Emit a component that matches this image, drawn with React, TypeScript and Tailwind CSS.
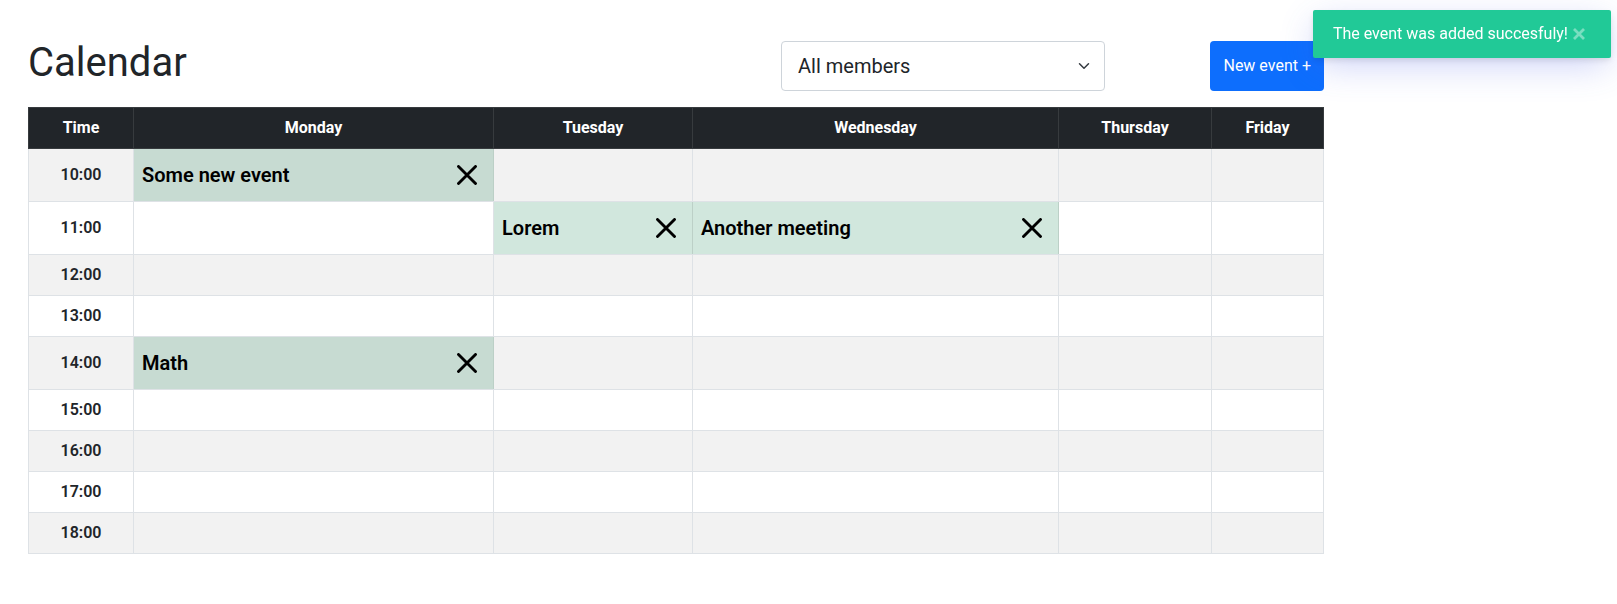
import { useState } from "react";

type CalendarEvent = { day: string; time: string; title: string };

const columns = [
  { name: "Time", width: "w-[105px]" },
  { name: "Monday", width: "w-[360px]" },
  { name: "Tuesday", width: "w-[199px]" },
  { name: "Wednesday", width: "w-[366px]" },
  { name: "Thursday", width: "w-[153px]" },
  { name: "Friday", width: "w-[112px]" },
];

const days = columns.slice(1).map((column) => column.name);

const times = ["10:00", "11:00", "12:00", "13:00", "14:00", "15:00", "16:00", "17:00", "18:00"];

const initialEvents: CalendarEvent[] = [
  { day: "Monday", time: "10:00", title: "Some new event" },
  { day: "Tuesday", time: "11:00", title: "Lorem" },
  { day: "Wednesday", time: "11:00", title: "Another meeting" },
  { day: "Monday", time: "14:00", title: "Math" },
];

function CloseIcon() {
  return (
    <svg viewBox="0 0 20 20" className="size-5" fill="none" stroke="currentColor" strokeWidth="2.9" strokeLinecap="round" aria-hidden="true">
      <path d="M1.5 1.5l17 17M18.5 1.5l-17 17" />
    </svg>
  );
}

function ChevronIcon() {
  return (
    <svg viewBox="0 0 16 16" className="pointer-events-none absolute right-[15px] size-3" fill="none" stroke="#343a40" strokeWidth="2" strokeLinecap="round" strokeLinejoin="round" aria-hidden="true">
      <path d="M2 5l6 6 6-6" />
    </svg>
  );
}

function Toast({ onClose }: { onClose: () => void }) {
  return (
    <div
      role="status"
      className="fixed top-[10px] right-[6px] flex h-12 items-center rounded-xs bg-[#21c997] pr-[21px] pl-5 text-white shadow-[0_3px_6px_-1px_rgba(0,0,0,0.12),0_10px_36px_-4px_rgba(77,96,232,0.3)]"
    >
      <span>The event was added succesfuly!</span>
      <button type="button" aria-label="Dismiss" onClick={onClose} className="px-[5px] opacity-40">
        <svg viewBox="0 0 12 12" className="size-3" fill="none" stroke="currentColor" strokeWidth="2.8" aria-hidden="true">
          <path d="M1 1l10 10M11 1L1 11" />
        </svg>
      </button>
    </div>
  );
}

export default function App() {
  const [events, setEvents] = useState(initialEvents);
  const [toastOpen, setToastOpen] = useState(true);

  return (
    <div className="bg-white font-[Roboto,sans-serif] text-base text-[#212529]">
      <main className="max-w-[1352px] px-7 pt-[41px] pb-12">
        <header className="mb-4 flex items-start">
          <h1 className="flex-1 text-[40px] leading-[44px]">Calendar</h1>
          <div className="relative flex w-1/4 items-center">
            <select
              aria-label="Member"
              className="h-[50px] w-full appearance-none rounded-[4px] border border-[#ced4da] bg-white pr-9 pl-4 text-xl"
            >
              <option>All members</option>
            </select>
            <ChevronIcon />
          </div>
          <div className="flex w-[219px] justify-end">
            <button type="button" className="h-[50px] rounded-[4px] bg-[#0d6efd] px-[13px] whitespace-nowrap text-white">
              New event +
            </button>
          </div>
        </header>

        <table className="w-full table-fixed border-collapse">
          <thead>
            <tr>
              {columns.map((column) => (
                <th key={column.name} scope="col" className={`${column.width} border border-[#373b3e] bg-[#212529] p-2 font-bold text-white`}>
                  {column.name}
                </th>
              ))}
            </tr>
          </thead>
          <tbody>
            {times.map((time) => (
              <tr key={time} className="group h-[41px] odd:bg-[#f2f2f2]">
                <th scope="row" className="border border-[#dee2e6] p-2 font-semibold">
                  {time}
                </th>
                {days.map((day) => {
                  const event = events.find((item) => item.day === day && item.time === time);
                  if (!event) {
                    return <td key={day} className="border border-[#dee2e6] p-2" />;
                  }
                  return (
                    <td key={day} className="border border-[#dee2e6] border-r-[#bcd0c7] bg-[#d1e7dd] p-2 text-black group-odd:bg-[#c7dbd2]">
                      <div className="flex h-9 items-center justify-between">
                        <span className="text-xl font-semibold">{event.title}</span>
                        <button
                          type="button"
                          aria-label={`Delete ${event.title}`}
                          onClick={() => setEvents(events.filter((item) => item !== event))}
                          className="p-2"
                        >
                          <CloseIcon />
                        </button>
                      </div>
                    </td>
                  );
                })}
              </tr>
            ))}
          </tbody>
        </table>
      </main>

      {toastOpen && <Toast onClose={() => setToastOpen(false)} />}
    </div>
  );
}
